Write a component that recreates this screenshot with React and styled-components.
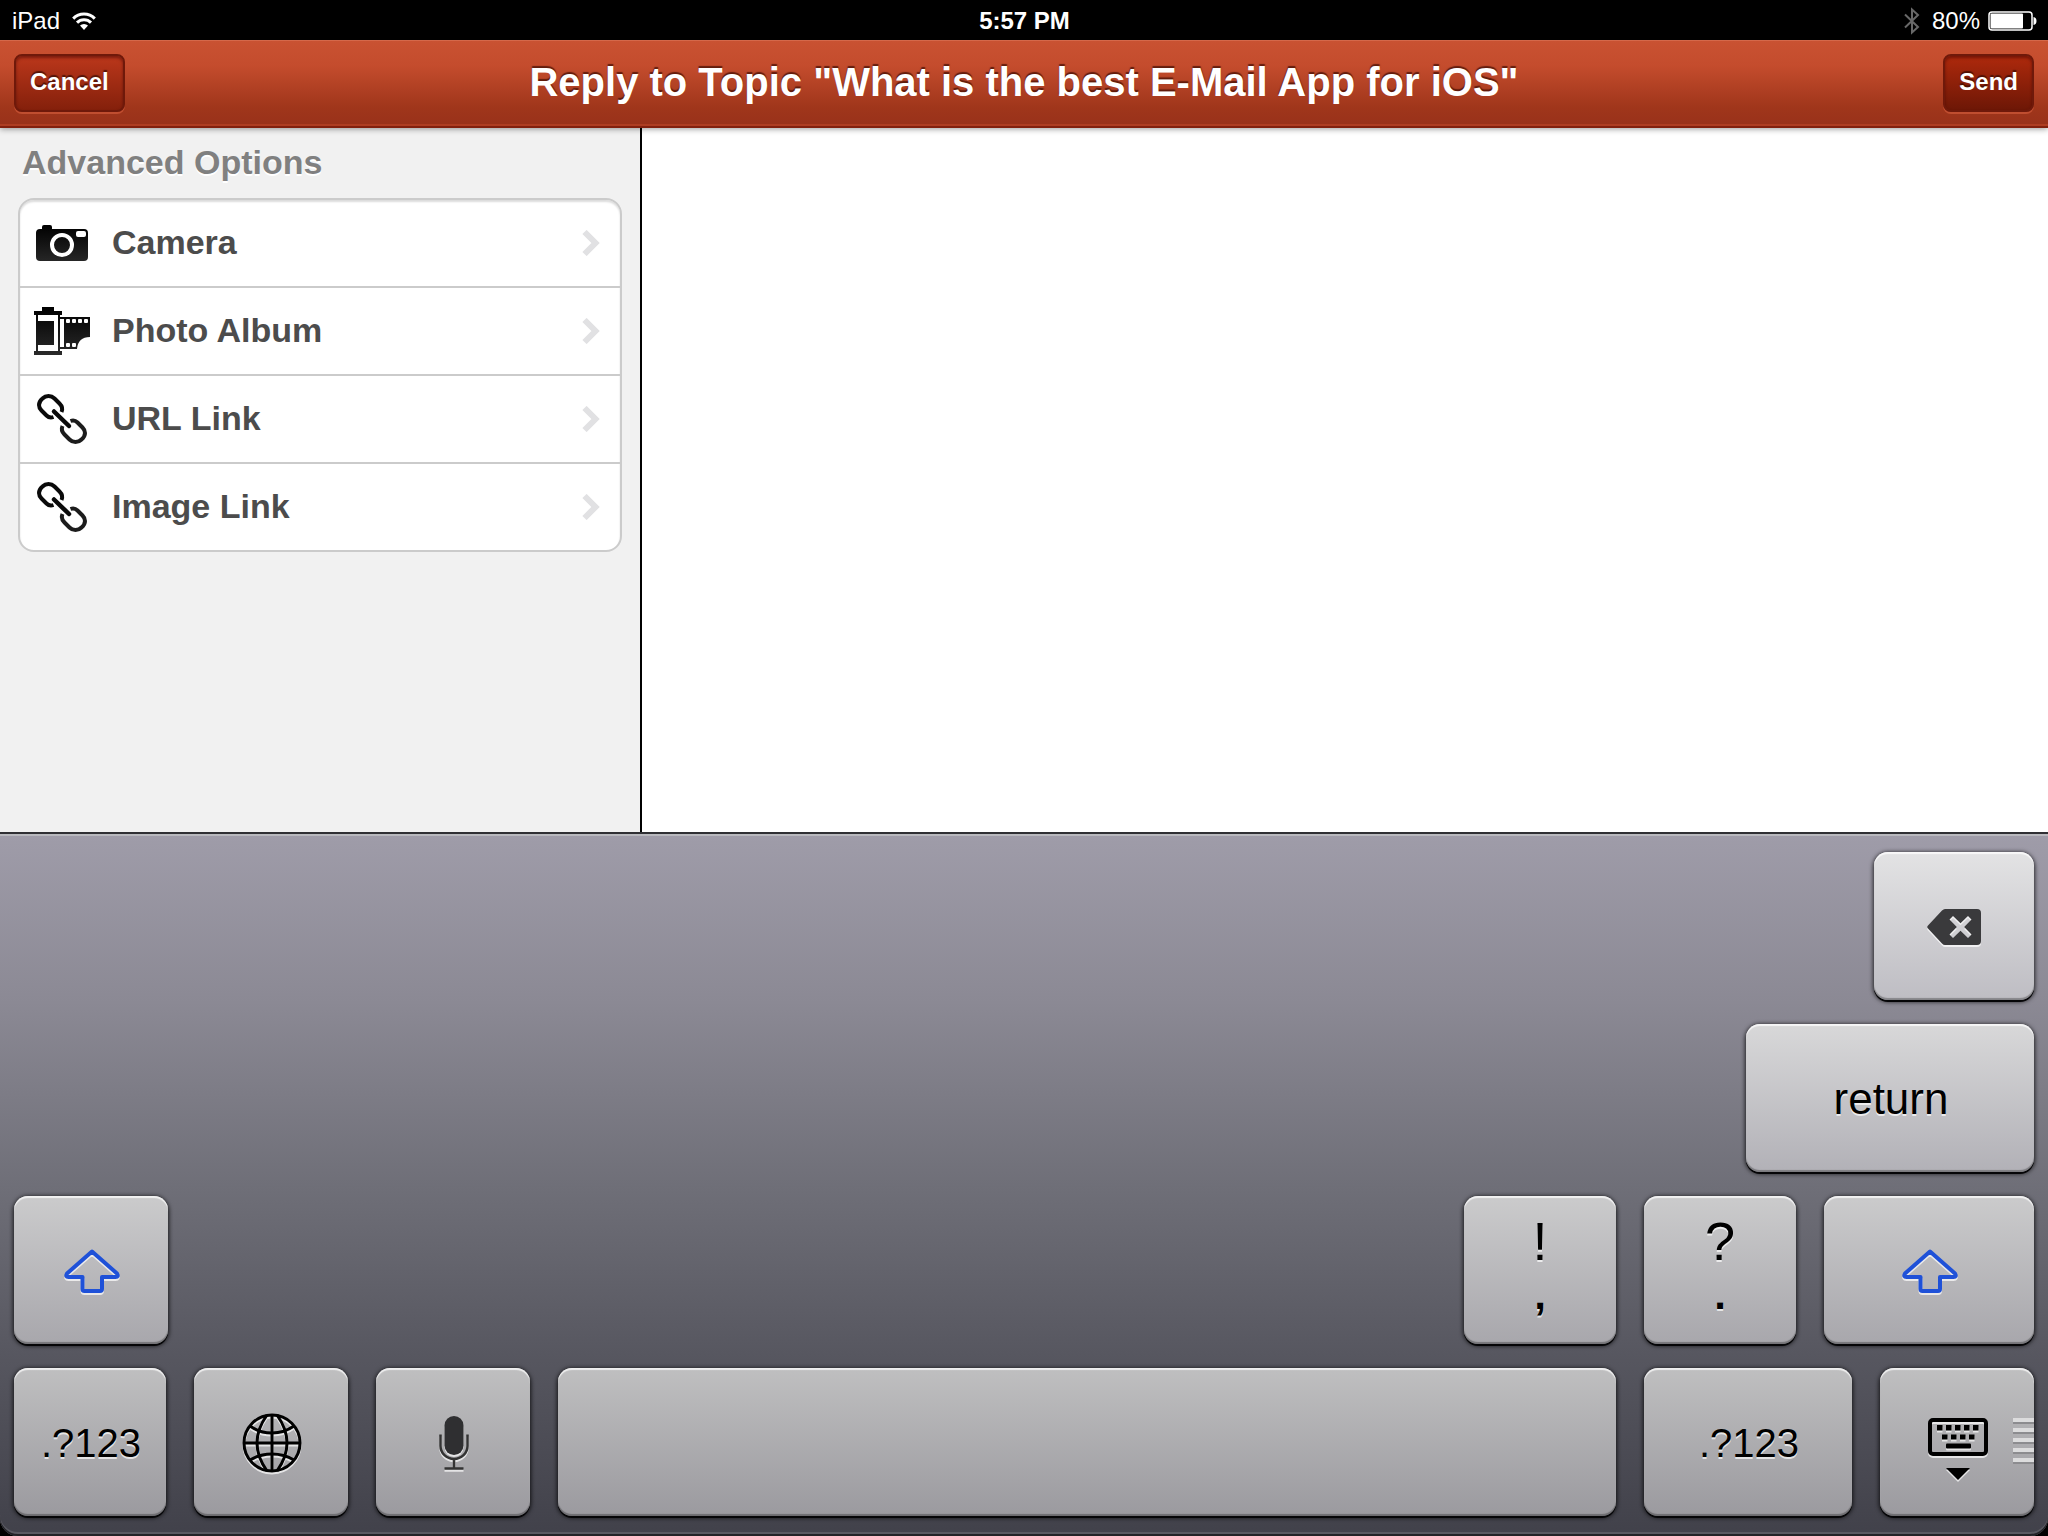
import React from 'react';
import styled, { createGlobalStyle } from 'styled-components';

const colors = {
  sidebar: '#f1f1f1',
  heading: '#808080',
  rowText: '#4c4c4c',
  line: '#cbcbcb',
  chevron: '#e1e1e3',
  shift: '#1f51d8',
};

// key faces get darker from the top row to the bottom one
const keyFaces = [
  ['#e3e3e4', '#bebdc3'],
  ['#d8d8d9', '#b2b1b7'],
  ['#cbcbcc', '#a8a7ac'],
  ['#bfbfc0', '#9b9a9f'],
];

const GlobalStyle = createGlobalStyle`
  * {
    box-sizing: border-box;
  }
  body {
    margin: 0;
    background: #000;
    font-family: "Liberation Sans", Arial, sans-serif;
  }
  button, textarea {
    font-family: inherit;
  }
`;

const Screen = styled.div`
  min-height: 100vh;
  display: flex;
  flex-direction: column;
`;

const StatusBar = styled.div`
  height: 40px;
  padding: 2px 11px 0 12px;
  display: grid;
  grid-template-columns: 1fr auto 1fr;
  align-items: center;
  background: #000;
  color: #fff;
  font-size: 24px;
`;

const StatusGroup = styled.div`
  display: flex;
  align-items: center;
  justify-content: ${props => (props.$end ? 'flex-end' : 'flex-start')};
  gap: ${props => (props.$end ? '8px' : '12px')};
`;

const Clock = styled.span`
  font-weight: bold;
`;

const StatusIcon = styled.svg`
  flex: none;
  display: block;
`;

const NavBar = styled.header`
  position: relative;
  z-index: 1;
  height: 88px;
  padding: 0 14px;
  display: grid;
  grid-template-columns: 1fr auto 1fr;
  align-items: center;
  background: linear-gradient(#c95232, #c44c2d 30%, #a0361b 78%, #98311a);
  border-bottom: 2px solid #82200e;
  box-shadow:
    inset 0 1px 0 #d4684a,
    inset 0 -2px 0 #ae3d22,
    0 1px 6px rgba(0, 0, 0, 0.4);
`;

const Title = styled.h1`
  margin: 0;
  padding-bottom: 2px;
  color: #fff;
  font-size: 40px;
  line-height: 48px;
  text-shadow: 0 -2px 1px rgba(60, 10, 0, 0.7);
`;

const NavButton = styled.button`
  height: 58px;
  padding: 0 14px 2px;
  justify-self: ${props => (props.$primary ? 'end' : 'start')};
  color: #fff;
  font-size: 24px;
  font-weight: bold;
  text-shadow: 0 -2px 1px rgba(50, 8, 0, 0.7);
  background: ${props => (props.$primary
    ? 'linear-gradient(#ae290c, #6d1706)'
    : 'linear-gradient(#bb371b, #84200b)')};
  border: 2px solid #6f190a;
  border-radius: 8px;
  box-shadow:
    inset 0 2px 3px rgba(60, 0, 0, 0.5),
    0 2px 0 #c04e30;
`;

const Compose = styled.main`
  flex: 1;
  display: flex;
  background: #fff;
`;

const Sidebar = styled.aside`
  width: 642px;
  flex: none;
  padding: 14px 18px;
  background: ${colors.sidebar};
  border-right: 2px solid #000;
`;

const SidebarHeading = styled.h2`
  margin: 0 4px 16px;
  color: ${colors.heading};
  font-size: 34px;
  line-height: 40px;
  text-shadow: 0 2px 0 #fff;
`;

const OptionList = styled.ul`
  list-style: none;
  margin: 0;
  padding: 0;
  overflow: hidden;
  background: #fff;
  border: 2px solid ${colors.line};
  border-radius: 16px;
  box-shadow: inset 0 2px 2px #dcdcdc;
`;

const OptionItem = styled.li`
  &:not(:last-child) {
    border-bottom: 2px solid ${colors.line};
  }
`;

const OptionButton = styled.button`
  width: 100%;
  height: 86px;
  padding: 0 20px 0 14px;
  display: flex;
  align-items: center;
  gap: 22px;
  border: 0;
  background: none;
  color: ${colors.rowText};
  font-size: 34px;
  font-weight: bold;
  text-align: left;
`;

const OptionLabel = styled.span`
  flex: 1;
  padding-bottom: 2px;
`;

const Editor = styled.textarea`
  flex: 1;
  min-width: 0;
  padding: 16px;
  border: 0;
  outline: 0;
  resize: none;
  background: #fff;
  font-size: 34px;
`;

const KeyboardPanel = styled.section`
  padding: 18px 14px 20px;
  display: flex;
  flex-direction: column;
  gap: 24px;
  border-top: 2px solid #2f2f33;
  border-radius: 0 0 18px 18px;
  background: linear-gradient(#9f9ca9, #8b8994 24%, #6f6f78 50%, #56565f 75%, #41414a);
  box-shadow:
    inset 0 2px 0 #b9b9be,
    inset 0 -2px 0 #222226,
    inset 0 -4px 0 #595961;
`;

const KeyRow = styled.div`
  display: flex;
  justify-content: flex-end;
  gap: 28px;
`;

const Key = styled.button`
  position: relative;
  flex: ${props => (props.$width ? 'none' : '1')};
  width: ${props => (props.$width ? `${props.$width}px` : 'auto')};
  height: 148px;
  margin-right: ${props => (props.$pushNext ? 'auto' : '0')};
  padding: ${props => (props.$stacked ? '0 0 10px' : '2px 0 0 2px')};
  display: flex;
  flex-direction: column;
  align-items: center;
  justify-content: center;
  border: 0;
  border-radius: 14px;
  color: #000;
  font-size: ${props => props.$size || 40}px;
  text-shadow: 0 2px 0 rgba(255, 255, 255, 0.7);
  background: linear-gradient(${props => keyFaces[props.$row].join(', ')});
  box-shadow:
    inset 0 2px 1px rgba(255, 255, 255, 0.75),
    inset 0 -2px 1px rgba(0, 0, 0, 0.3),
    0 2px 0 #050507,
    0 1px 4px 1px rgba(0, 0, 0, 0.75);
`;

const UpperSymbol = styled.span`
  font-size: 54px;
  line-height: 60px;
`;

const LowerSymbol = styled.span`
  font-size: 42px;
  font-weight: bold;
  line-height: 48px;
`;

const KeyIcon = styled.svg`
  display: block;
  overflow: visible;
  filter: drop-shadow(0 2px 0 rgba(255, 255, 255, 0.7));
`;

const Grip = styled.span`
  position: absolute;
  top: 50px;
  right: 0;
  width: 21px;
  height: 48px;
  background: repeating-linear-gradient(
    #dcdcdd 0 4px,
    #8c8c8f 4px 6px,
    transparent 6px 10px
  );
`;

const WifiIcon = () => (
  <StatusIcon width="24" height="18" viewBox="0 0 24 18" fill="none" stroke="#fff" strokeWidth="3">
    <path d="M1.2 6.6a15.2 15.2 0 0 1 21.6 0" />
    <path d="M5 10.6a9.8 9.8 0 0 1 14 0" />
    <path d="M8 13.6a5.7 5.7 0 0 1 8 0L12 18z" fill="#fff" stroke="none" />
  </StatusIcon>
);

const BluetoothIcon = () => (
  <StatusIcon width="20" height="28" viewBox="0 0 20 28" fill="none" stroke="#686868" strokeWidth="2">
    <path d="M1 7.5 14 20 8 25.500V2.500L14 8 1 20.500" />
  </StatusIcon>
);

const BatteryIcon = () => (
  <StatusIcon width="49" height="20" viewBox="0 0 49 20">
    <rect x="1" y="1" width="43" height="18" rx="3" fill="none" stroke="#fff" strokeWidth="1.5" />
    <rect x="2.500" y="2.500" width="32.500" height="15" rx="1" fill="#fff" />
    <path d="M45.500 6q3 .5 3 4t-3 4z" fill="#fff" />
  </StatusIcon>
);

const CameraIcon = () => (
  <svg width="56" height="48" viewBox="0 0 56 48">
    <defs>
      <linearGradient id="camera" x1="0" y1="0" x2="0" y2="1">
        <stop offset="0" stopColor="#000" />
        <stop offset="1" stopColor="#262626" />
      </linearGradient>
    </defs>
    <path
      d="M6 10h2V8q0-2 2-2h6q2 0 2 2v2h32q4 0 4 4v24q0 4-4 4H6q-4 0-4-4V14q0-4 4-4z"
      fill="url(#camera)"
    />
    <circle cx="28" cy="26" r="10" fill="none" stroke="#fff" strokeWidth="4" />
    <rect x="42" y="12" width="10" height="6" rx="2" fill="#fff" />
  </svg>
);

const FilmIcon = () => (
  <svg width="56" height="48" viewBox="0 0 56 48">
    <defs>
      <linearGradient id="film" gradientUnits="userSpaceOnUse" x1="0" y1="0" x2="0" y2="48">
        <stop offset="0" stopColor="#000" />
        <stop offset="1" stopColor="#2a2a2a" />
      </linearGradient>
    </defs>
    <g fill="url(#film)">
      <path d="M8 0h12v4h8v4H0V4h8zM0 44h28v4H0zM2 8h2v36H2zM24 8h2v36h-2zM4 14h16v24H4z" />
      <path d="M26 10h30v20q-12 0-13 12H26v-2h4V12h-4z" />
    </g>
    <g fill="#fff">
      <rect x="32" y="12" width="4" height="4" rx="1" />
      <rect x="38" y="12" width="4" height="4" rx="1" />
      <rect x="44" y="12" width="4" height="4" rx="1" />
      <rect x="50" y="12" width="4" height="4" rx="1" />
      <rect x="32" y="36" width="4" height="4" rx="1" />
      <rect x="38" y="36" width="4" height="4" rx="1" />
    </g>
  </svg>
);

const chainLink = 'M27.500 18Q29.500 13.500 25.500 9.500L20.500 4.500Q18 2 14.500 2 11 2 8.500 4.500 5 7.500 5 11 5 14 7.500 16.500L12.500 21.500Q15.500 24.500 19.500 23';

const ChainIcon = () => (
  <svg width="56" height="50" viewBox="0 0 56 50" fill="none" stroke="#0a0a0a" strokeWidth="4">
    <path d={chainLink} />
    <path d="M20 17.500 35 32" strokeWidth="4.500" strokeLinecap="round" />
    <path d={chainLink} transform="rotate(180 28 25)" stroke="#1c1c1c" />
  </svg>
);

const Chevron = () => (
  <svg width="18" height="26" viewBox="0 0 18 26" fill="none" stroke={colors.chevron} strokeWidth="6">
    <path d="M2.500 2 13.500 13 2.500 24" />
  </svg>
);

const DeleteIcon = () => (
  <KeyIcon width="56" height="36" viewBox="0 0 56 36">
    <path
      d="M18 0h32q4 0 4 4v28q0 4-4 4H18q-1.500 0-3-1.500L1 19.500q-1.500-1.500 0-3l14-15Q16.500 0 18 0zM26 7l-3.500 3.500L29.800 18l-7.300 7.500L26 29l7.500-7.300L41 29l3.500-3.500-7.300-7.500 7.300-7.500L41 7l-7.500 7.300z"
      fill="#3a3a3c"
      fillRule="evenodd"
    />
  </KeyIcon>
);

const ShiftIcon = () => (
  <KeyIcon width="56" height="44" viewBox="0 0 56 44" fill="none" stroke={colors.shift} strokeWidth="4" strokeLinejoin="round">
    <path d="M28 2.500 53 24.500q2 3.500-1.500 3.500H38v12q0 2-2 2H20.500q-2 0-2-2V28H4.500Q1 28 3 24.500z" />
  </KeyIcon>
);

const GlobeIcon = () => (
  <KeyIcon width="60" height="60" viewBox="-30 -30 60 60" fill="none" stroke="#000" strokeWidth="3">
    <circle r="28" />
    <path d="M0-28v56M-28 0h56" />
    <path d="M-5-28Q-15-14-15 0t10 28M5-28Q15-14 15 0T5 28" />
    <path d="M-22-17Q-12-10 0-10t22-7M-22 17Q-12 11 0 11t22 6" />
  </KeyIcon>
);

const MicIcon = () => (
  <KeyIcon width="30" height="54" viewBox="0 0 30 54" fill="none" stroke="#333" strokeWidth="2.5">
    <rect x="5.500" y="0" width="19" height="39" rx="9.500" fill="#2f2f31" stroke="none" />
    <path d="M1.500 18.500V30a13.500 13 0 0 0 27 0V18.500M15 43v9M5.500 52.500h19" />
  </KeyIcon>
);

const HideKeyboardIcon = () => (
  <KeyIcon width="60" height="74" viewBox="0 0 60 74">
    <rect x="2" y="14" width="56" height="34" rx="3" fill="none" stroke="#000" strokeWidth="4" />
    {[9, 18, 27, 36, 45].map(x => <rect key={x} x={x} y="19" width="5.500" height="5.500" />)}
    {[14, 23, 32, 41].map(x => <rect key={x} x={x} y="28.500" width="5.500" height="5" />)}
    <rect x="18" y="37.500" width="25" height="5" rx="1" />
    <path d="M18 62h24L30 74z" />
  </KeyIcon>
);

const options = [
  { id: 'camera', label: 'Camera', Icon: CameraIcon },
  { id: 'album', label: 'Photo Album', Icon: FilmIcon },
  { id: 'url', label: 'URL Link', Icon: ChainIcon },
  { id: 'image', label: 'Image Link', Icon: ChainIcon },
];

const Keyboard = () => (
  <KeyboardPanel aria-label="Keyboard">
    <KeyRow>
      <Key $row={0} $width={160} aria-label="Delete"><DeleteIcon /></Key>
    </KeyRow>
    <KeyRow>
      <Key $row={1} $width={288} $size={44}>return</Key>
    </KeyRow>
    <KeyRow>
      <Key $row={2} $width={154} $pushNext aria-label="Shift"><ShiftIcon /></Key>
      <Key $row={2} $width={152} $stacked>
        <UpperSymbol>!</UpperSymbol>
        <LowerSymbol>,</LowerSymbol>
      </Key>
      <Key $row={2} $width={152} $stacked>
        <UpperSymbol>?</UpperSymbol>
        <LowerSymbol>.</LowerSymbol>
      </Key>
      <Key $row={2} $width={210} aria-label="Shift"><ShiftIcon /></Key>
    </KeyRow>
    <KeyRow>
      <Key $row={3} $width={152}>.?123</Key>
      <Key $row={3} $width={154} aria-label="Next keyboard"><GlobeIcon /></Key>
      <Key $row={3} $width={154} aria-label="Dictate"><MicIcon /></Key>
      <Key $row={3} aria-label="Space" />
      <Key $row={3} $width={208}>.?123</Key>
      <Key $row={3} $width={154} aria-label="Hide keyboard">
        <HideKeyboardIcon />
        <Grip />
      </Key>
    </KeyRow>
  </KeyboardPanel>
);

export default function App() {
  return (
    <Screen>
      <GlobalStyle />
      <StatusBar>
        <StatusGroup>
          <span>iPad</span>
          <WifiIcon />
        </StatusGroup>
        <Clock>5:57 PM</Clock>
        <StatusGroup $end>
          <BluetoothIcon />
          <span>80%</span>
          <BatteryIcon />
        </StatusGroup>
      </StatusBar>
      <NavBar>
        <NavButton>Cancel</NavButton>
        <Title>Reply to Topic "What is the best E-Mail App for iOS"</Title>
        <NavButton $primary>Send</NavButton>
      </NavBar>
      <Compose>
        <Sidebar>
          <SidebarHeading>Advanced Options</SidebarHeading>
          <OptionList>
            {options.map(({ id, label, Icon }) => (
              <OptionItem key={id}>
                <OptionButton>
                  <Icon />
                  <OptionLabel>{label}</OptionLabel>
                  <Chevron />
                </OptionButton>
              </OptionItem>
            ))}
          </OptionList>
        </Sidebar>
        <Editor aria-label="Message" />
      </Compose>
      <Keyboard />
    </Screen>
  );
}
